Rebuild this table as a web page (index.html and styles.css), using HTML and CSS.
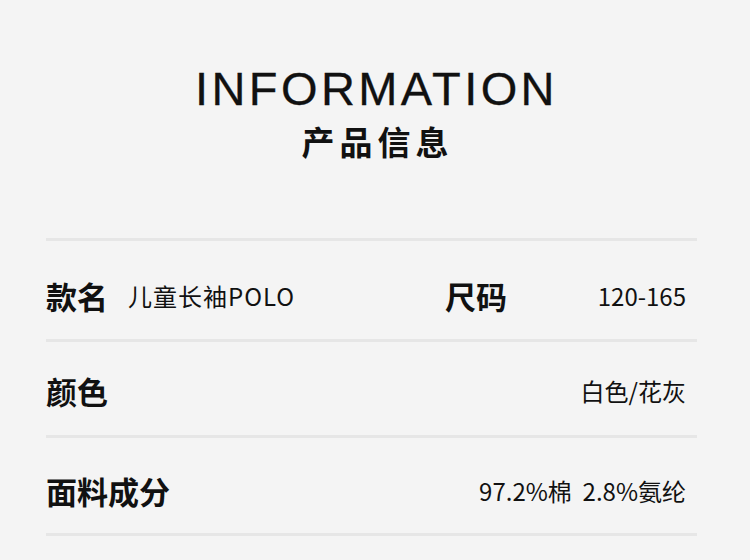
FILE: index.html
```html
<!DOCTYPE html>
<html lang="zh">
<head>
<meta charset="utf-8">
<link rel="stylesheet" href="styles.css">
</head>
<body>
<div class="page">
  <h1 class="title-en">INFORMATION</h1>
  <h2 class="title-cn">产品信息</h2>
  <div class="table">
    <div class="row row-1">
      <div class="cell">
        <span class="label">款名</span>
        <span class="value value-name">儿童长袖POLO</span>
      </div>
      <div class="cell cell-right">
        <span class="label">尺码</span>
        <span class="value">120-165</span>
      </div>
    </div>
    <div class="row row-2">
      <span class="label">颜色</span>
      <span class="value">白色/花灰</span>
    </div>
    <div class="row row-3">
      <span class="label">面料成分</span>
      <span class="value">97.2%棉&nbsp;&nbsp;2.8%氨纶</span>
    </div>
  </div>
</div>
</body>
</html>
```
FILE: styles.css
```css
html, body {
  margin: 0;
  padding: 0;
}
body {
  background: #f4f4f4;
  color: #111;
  font-family: "Noto Sans CJK SC", "Noto Sans", sans-serif;
  width: 750px;
  height: 560px;
  overflow: hidden;
}
.page {
  padding-top: 65px;
}
.title-en {
  margin: 0;
  font-family: "Liberation Sans", Arial, sans-serif;
  font-weight: 400;
  font-size: 47px;
  line-height: 47px;
  letter-spacing: 3.4px;
  text-align: center;
  padding-left: 3px;
  -webkit-text-stroke: 0.3px #111;
}
.title-cn {
  margin: 13px 0 0;
  font-size: 33px;
  line-height: 33px;
  font-weight: 700;
  letter-spacing: 5px;
  text-align: center;
  padding-left: 5px;
}
.table {
  margin: 80px 0 0 46px;
  width: 651px;
  border-top: 3px solid #e6e6e6;
}
.row {
  display: flex;
  align-items: center;
  justify-content: space-between;
  border-bottom: 3px solid #e6e6e6;
  padding-right: 11px;
  box-sizing: border-box;
}
.row-1 {
  height: 101px;
  padding-top: 12px;
  display: grid;
  grid-template-columns: 399px 1fr;
}
.row-2 {
  height: 96px;
  padding-top: 4px;
}
.row-3 {
  height: 98px;
  padding-top: 10px;
}
.cell {
  display: flex;
  align-items: center;
  gap: 20px;
}
.cell-right {
  justify-content: space-between;
}
.label {
  font-size: 31px;
  line-height: 36px;
  font-weight: 700;
}
.value {
  font-size: 24px;
  line-height: 30px;
  font-weight: 400;
}
.value-name {
  letter-spacing: 1px;
}
```
